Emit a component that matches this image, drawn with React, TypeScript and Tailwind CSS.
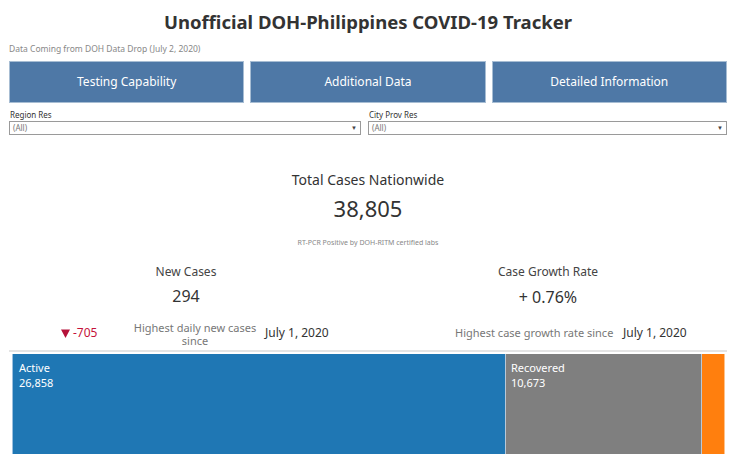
const font = { fontFamily: '"Noto Sans", "Open Sans", sans-serif' };

function Dropdown({ label, className }: { label: string; className: string }) {
  return (
    <div className={className}>
      <div className="h-[12px] text-[8px] leading-[12px] text-[#333] pl-[1px]">{label}</div>
      <div className="flex h-[14px] items-center justify-between border border-[#9a9a9a] bg-white px-[3px]">
        <span className="text-[8px] leading-[12px] text-[#777]">(All)</span>
        <span className="text-[6px] text-[#444]">▼</span>
      </div>
    </div>
  );
}

export default function App() {
  return (
    <div className="relative h-[454px] w-[736px] overflow-hidden bg-white" style={font}>
      <h1 className="pt-[9px] text-center text-[18.5px] font-bold leading-[26px] text-[#333]">
        Unofficial DOH-Philippines COVID-19 Tracker
      </h1>
      <p className="mt-[8px] pl-[9px] text-[8.5px] leading-[12px] text-[#888]">
        Data Coming from DOH Data Drop (July 2, 2020)
      </p>

      <div className="mt-[6px] grid grid-cols-3 gap-[6px] pl-[9px] pr-[9px]">
        {["Testing Capability", "Additional Data", "Detailed Information"].map((t) => (
          <div
            key={t}
            className="flex h-[42px] items-center justify-center border border-[#a7bdd3] bg-[#4e78a6] text-[12px] text-white"
          >
            {t}
          </div>
        ))}
      </div>

      <div className="mt-[6px] flex gap-[7px] pl-[9px]">
        <Dropdown label="Region Res" className="w-[352px]" />
        <Dropdown label="City Prov Res" className="w-[359px]" />
      </div>

      <div className="mt-[35px] flex flex-col items-center">
        <div className="text-[14px] leading-[20px] text-[#333]">Total Cases Nationwide</div>
        <div className="mt-[3px] text-[22px] leading-[30px] text-[#333]">38,805</div>
        <div className="mt-[15px] text-[7px] leading-[10px] text-[#888]">
          RT-PCR Positive by DOH-RITM certified labs
        </div>
      </div>

      <div className="mt-[15px] flex pl-[9px] pr-[9px]">
        <div className="flex w-[354px] flex-col items-center">
          <div className="text-[12px] leading-[18px] text-[#444]">New Cases</div>
          <div className="mt-[4px] text-[16px] leading-[22px] text-[#333]">294</div>
        </div>
        <div className="ml-[6px] flex w-[358px] flex-col items-center">
          <div className="text-[12px] leading-[18px] text-[#444]">Case Growth Rate</div>
          <div className="mt-[5px] text-[16px] leading-[22px] text-[#333]">+ 0.76%</div>
        </div>
      </div>

      <div className="relative mt-[11px] h-[31px]">
        <div className="absolute left-[61px] top-[5px] flex items-center gap-[3px] text-[12px] leading-[18px] text-[#c5123a]">
          <svg width="9" height="9" viewBox="0 0 9 9">
            <path d="M0 0.5H9L4.5 9Z" fill="#b5123a" />
          </svg>
          <span>-705</span>
        </div>
        <div className="absolute left-[131px] top-[2px] h-[24px] w-[128px] overflow-hidden text-center text-[11px] leading-[13px] text-[#777]">
          Highest daily new cases since
        </div>
        <div className="absolute left-[265px] top-[5px] text-[12px] leading-[18px] text-[#333]">
          July 1, 2020
        </div>
        <div className="absolute left-[455px] top-[5px] text-[11px] leading-[18px] text-[#777]">
          Highest case growth rate since
        </div>
        <div className="absolute left-[623px] top-[5px] text-[12px] leading-[18px] text-[#333]">
          July 1, 2020
        </div>
      </div>

      <div className="ml-[9px] h-[2px] w-[718px] bg-[#e4e4e4]" />

      <div className="ml-[12px] mt-[2px] flex h-[110px] w-[713px]">
        <div className="w-[493px] border-l border-[#9cc0de] bg-[#1f77b4] px-[6px] pt-[6px] text-[11px] leading-[15px] text-white">
          <div>Active</div>
          <div>26,858</div>
        </div>
        <div className="w-[196px] border-l border-[#b8c8d8] bg-[#7f7f7f] px-[5px] pt-[6px] text-[11px] leading-[15px] text-white">
          <div>Recovered</div>
          <div>10,673</div>
        </div>
        <div className="flex-1 border-l border-r border-l-[#b8c8d8] border-r-[#ffc28a] bg-[#ff7f0e]" />
      </div>
    </div>
  );
}
